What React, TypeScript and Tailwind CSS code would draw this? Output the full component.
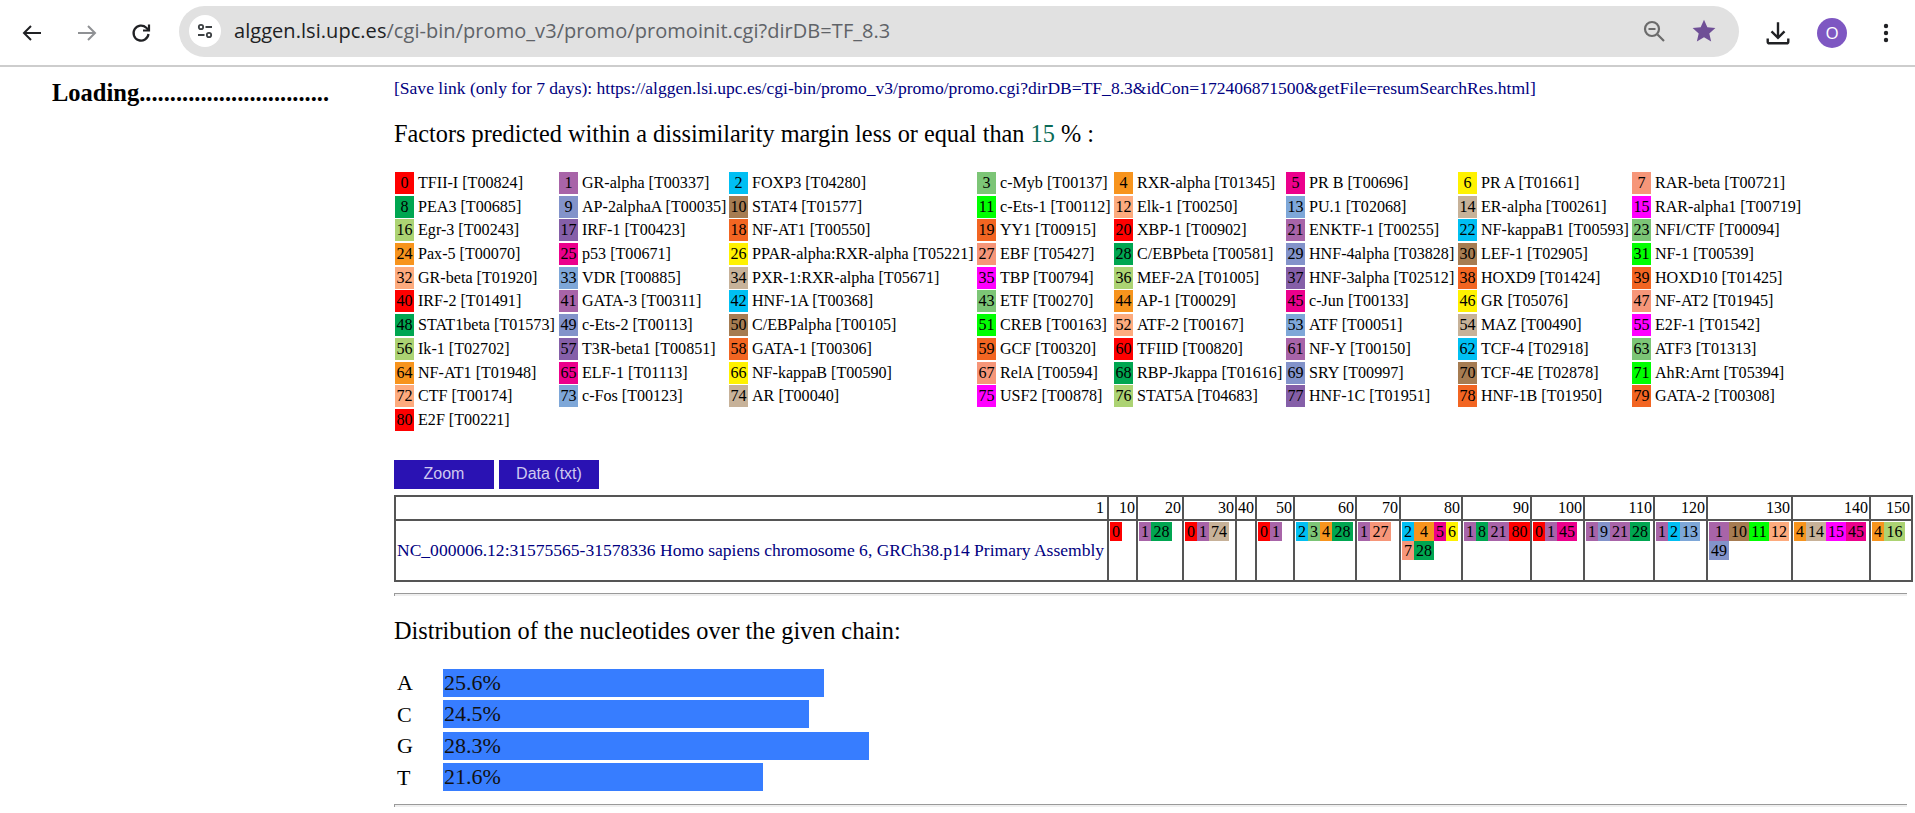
import React from "react";

const palette = ["#ff0000","#a864a8","#00bff3","#7cc576","#f7941d","#ec008c","#fff200","#f69679","#00a651","#8393ca","#a67c52","#00ff00","#fdab7e","#7ea7d8","#c7b299","#ff00ff","#acd373","#855fa8","#f26522","#f26522"];
const names = ["TFII-I [T00824]","GR-alpha [T00337]","FOXP3 [T04280]","c-Myb [T00137]","RXR-alpha [T01345]","PR B [T00696]","PR A [T01661]","RAR-beta [T00721]","PEA3 [T00685]","AP-2alphaA [T00035]","STAT4 [T01577]","c-Ets-1 [T00112]","Elk-1 [T00250]","PU.1 [T02068]","ER-alpha [T00261]","RAR-alpha1 [T00719]","Egr-3 [T00243]","IRF-1 [T00423]","NF-AT1 [T00550]","YY1 [T00915]","XBP-1 [T00902]","ENKTF-1 [T00255]","NF-kappaB1 [T00593]","NFI/CTF [T00094]","Pax-5 [T00070]","p53 [T00671]","PPAR-alpha:RXR-alpha [T05221]","EBF [T05427]","C/EBPbeta [T00581]","HNF-4alpha [T03828]","LEF-1 [T02905]","NF-1 [T00539]","GR-beta [T01920]","VDR [T00885]","PXR-1:RXR-alpha [T05671]","TBP [T00794]","MEF-2A [T01005]","HNF-3alpha [T02512]","HOXD9 [T01424]","HOXD10 [T01425]","IRF-2 [T01491]","GATA-3 [T00311]","HNF-1A [T00368]","ETF [T00270]","AP-1 [T00029]","c-Jun [T00133]","GR [T05076]","NF-AT2 [T01945]","STAT1beta [T01573]","c-Ets-2 [T00113]","C/EBPalpha [T00105]","CREB [T00163]","ATF-2 [T00167]","ATF [T00051]","MAZ [T00490]","E2F-1 [T01542]","Ik-1 [T02702]","T3R-beta1 [T00851]","GATA-1 [T00306]","GCF [T00320]","TFIID [T00820]","NF-Y [T00150]","TCF-4 [T02918]","ATF3 [T01313]","NF-AT1 [T01948]","ELF-1 [T01113]","NF-kappaB [T00590]","RelA [T00594]","RBP-Jkappa [T01616]","SRY [T00997]","TCF-4E [T02878]","AhR:Arnt [T05394]","CTF [T00174]","c-Fos [T00123]","AR [T00040]","USF2 [T00878]","STAT5A [T04683]","HNF-1C [T01951]","HNF-1B [T01950]","GATA-2 [T00308]","E2F [T00221]"];

const cols: { label: string; w: number; items: [number, number][] }[] = [
  { label: "10", w: 29, items: [[0,12]] },
  { label: "20", w: 46, items: [[1,12],[28,21]] },
  { label: "30", w: 53, items: [[0,12],[1,12],[74,20]] },
  { label: "40", w: 20, items: [] },
  { label: "50", w: 38, items: [[0,12],[1,12]] },
  { label: "60", w: 62, items: [[2,12],[3,12],[4,12],[28,21]] },
  { label: "70", w: 44, items: [[1,12],[27,21]] },
  { label: "80", w: 62, items: [[2,12],[4,20],[5,12],[6,12],[7,12],[28,20]] },
  { label: "90", w: 69, items: [[1,12],[8,12],[21,21],[80,21]] },
  { label: "100", w: 53, items: [[0,12],[1,12],[45,20]] },
  { label: "110", w: 70, items: [[1,12],[9,12],[21,20],[28,20]] },
  { label: "120", w: 53, items: [[1,12],[2,12],[13,20]] },
  { label: "130", w: 85, items: [[1,20],[10,20],[11,20],[12,20],[49,20]] },
  { label: "140", w: 78, items: [[4,12],[14,20],[15,20],[45,20]] },
  { label: "150", w: 42, items: [[4,12],[16,21]] },
];

const bars: [string, string, number][] = [["A","25.6%",381],["C","24.5%",366],["G","28.3%",426],["T","21.6%",320]];

function Toolbar() {
  return (
    <div className="h-[67px] border-b-2 border-[#cdcdcd] flex items-center pl-[20px] bg-white shrink-0">
      <svg width="24" height="24" viewBox="0 0 24 24" className="shrink-0" fill="none" stroke="#202124" strokeWidth="2"><path d="M21 12H4M11 5l-7 7 7 7" /></svg>
      <svg width="24" height="24" viewBox="0 0 24 24" className="ml-[31px] shrink-0" fill="none" stroke="#8f9194" strokeWidth="2"><path d="M3 12h17M13 5l7 7-7 7" /></svg>
      <svg width="24" height="24" viewBox="0 0 24 24" className="ml-[30px] shrink-0" fill="none" stroke="#202124" strokeWidth="2.2"><path d="M19.5 13a7.5 7.5 0 1 1-2.2-6.3L20 9.5" /><path d="M20 3.5v6h-6" /></svg>
      <div className="ml-[26px] w-[1560px] h-[51px] rounded-full bg-[#e1e1e1] flex items-center pl-[10px] pr-[22px] shrink-0 mb-[3px]">
        <div className="w-[32px] h-[32px] rounded-full bg-white flex items-center justify-center shrink-0">
          <svg width="18" height="18" viewBox="0 0 18 18" fill="none" stroke="#3c4043" strokeWidth="1.8"><circle cx="5" cy="5" r="2.2" /><path d="M9.5 5H16M2 13h6.5" /><circle cx="13" cy="13" r="2.2" /></svg>
        </div>
        <div className="ml-[13px] text-[20px] text-[#5f6368] whitespace-nowrap tracking-[0.05px] [font-family:'Open_Sans',sans-serif]"><span className="text-[#202124]">alggen.lsi.upc.es</span>/cgi-bin/promo_v3/promo/promoinit.cgi?dirDB=TF_8.3</div>
        <div className="ml-auto flex items-center gap-[25px]">
          <svg width="24" height="24" viewBox="0 0 24 24" fill="none" stroke="#6b6b6b" strokeWidth="2.2"><circle cx="10" cy="10" r="7" /><path d="M15.5 15.5L22 22M6.5 10h7" /></svg>
          <svg width="26" height="26" viewBox="0 0 24 24" fill="#6f4f96"><path d="M12 1.5l3.1 7 7.4.7-5.6 5 1.7 7.5L12 17.8l-6.6 3.9 1.7-7.5-5.6-5 7.4-.7z" /></svg>
        </div>
      </div>
      <svg width="26" height="26" viewBox="0 0 24 24" className="ml-[26px] shrink-0" fill="none" stroke="#202124" strokeWidth="2.2"><path d="M12 2v14M6 10.5l6 6 6-6M2.5 17v3a1.5 1.5 0 0 0 1.5 1.5h16a1.5 1.5 0 0 0 1.5-1.5v-3" /></svg>
      <div className="ml-[26px] w-[30px] h-[30px] rounded-full bg-[#7e57c2] text-white text-[17px] flex items-center justify-center shrink-0 [font-family:'Open_Sans',sans-serif]">O</div>
      <svg width="6" height="24" viewBox="0 0 6 24" className="ml-[36px] shrink-0" fill="#202124"><circle cx="3" cy="5" r="2.2" /><circle cx="3" cy="12" r="2.2" /><circle cx="3" cy="19" r="2.2" /></svg>
    </div>
  );
}

function Legend() {
  return (
    <div className="grid grid-cols-[164px_170px_248px_137px_172px_172px_174px_200px] auto-rows-[23.7px] mt-[25px] ml-[1px]">
      {names.map((n, i) => (
        <div key={i} className="flex items-start whitespace-nowrap leading-[22px] text-[16.1px] text-black">
          <span className="w-[19px] h-[22px] mr-[4px] text-center shrink-0" style={{ background: palette[i % 20] }}>{i}</span>
          <span>{n}</span>
        </div>
      ))}
    </div>
  );
}

function SiteTable() {
  const border = "border-2 border-[#555555]";
  return (
    <table className="table-fixed border-collapse w-[1517px] text-[16px] mt-[6px]">
      <colgroup>
        <col className="w-[713px]" />
        {cols.map((c) => <col key={c.label} style={{ width: c.w }} />)}
      </colgroup>
      <tbody>
        <tr className="h-[24px]">
          <td className={`${border} text-right pr-[3px] leading-[20px]`}>1</td>
          {cols.map((c) => <td key={c.label} className={`${border} text-right pr-[1px] leading-[20px] overflow-hidden`}>{c.label}</td>)}
        </tr>
        <tr className="h-[61px]">
          <td className={`${border} text-[#000080] text-[17.55px] whitespace-nowrap overflow-hidden pl-[1px]`}>NC_000006.12:31575565-31578336 Homo sapiens chromosome 6, GRCh38.p14 Primary Assembly</td>
          {cols.map((c) => (
            <td key={c.label} className={`${border} align-top pl-[1px] pt-[1px]`}>
              <div className="flex flex-wrap">
                {c.items.map(([n, w], i) => (
                  <span key={i} className="h-[19px] leading-[19px] text-center" style={{ width: w, background: palette[n % 20] }}>{n}</span>
                ))}
              </div>
            </td>
          ))}
        </tr>
      </tbody>
    </table>
  );
}

export default function App() {
  return (
    <div className="w-[1915px] h-[813px] overflow-hidden bg-white flex flex-col text-black [font-family:'Liberation_Serif',serif]">
      <Toolbar />
      <div className="flex flex-1 min-h-0">
        <div className="w-[394px] shrink-0 pl-[52px] pt-[13px] text-[24.5px] font-bold leading-[26px] whitespace-nowrap">Loading...............................</div>
        <div className="flex-1 min-w-0 pr-[4px]">
          <div className="mt-[13px] text-[17.55px] leading-[17px] text-[#000080] whitespace-nowrap">[Save link (only for 7 days): https://alggen.lsi.upc.es/cgi-bin/promo_v3/promo/promo.cgi?dirDB=TF_8.3&amp;idCon=172406871500&amp;getFile=resumSearchRes.html]</div>
          <div className="mt-[24px] text-[24.3px] leading-[26px] whitespace-nowrap">Factors predicted within a dissimilarity margin less or equal than <span className="text-[#0b6b57]">15</span> % :</div>
          <Legend />
          <div className="flex gap-[5px] mt-[27px]">
            <button className="w-[100px] h-[29px] bg-[#2a12b3] text-[#cfc8f0] text-[16px] [font-family:'Liberation_Sans',sans-serif]">Zoom</button>
            <button className="w-[100px] h-[29px] bg-[#2a12b3] text-[#cfc8f0] text-[16px] [font-family:'Liberation_Sans',sans-serif]">Data (txt)</button>
          </div>
          <SiteTable />
          <div className="mt-[11px] w-[1513px] h-[3px] border-t border-l border-[#9a9a9a] bg-[#efefef]" />
          <div className="mt-[22px] text-[24.3px] leading-[26px] whitespace-nowrap">Distribution of the nucleotides over the given chain:</div>
          <div className="mt-[25px] flex flex-col gap-[3.5px]">
            {bars.map(([l, p, w]) => (
              <div key={l} className="flex items-center h-[28px] text-[22px]">
                <span className="w-[49px] pl-[3px] shrink-0">{l}</span>
                <div className="h-[28px] bg-[#377dff] pl-[1px] leading-[28px] text-[#111]" style={{ width: w }}>{p}</div>
              </div>
            ))}
          </div>
          <div className="mt-[13px] w-[1513px] h-[3px] border-t border-l border-[#9a9a9a] bg-[#efefef]" />
        </div>
      </div>
    </div>
  );
}
